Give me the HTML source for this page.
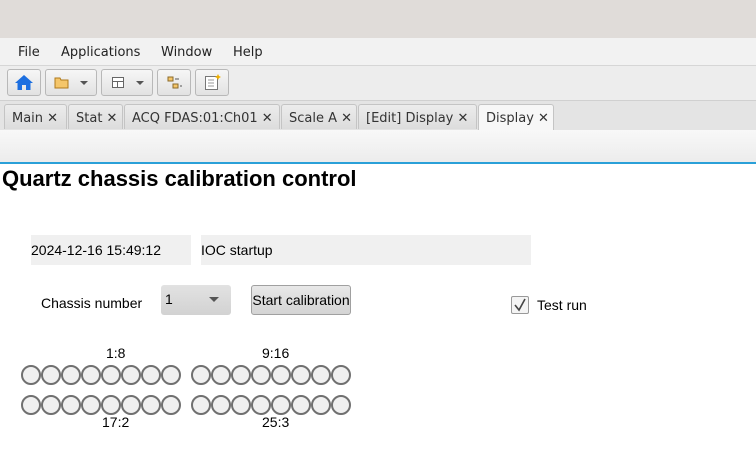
<!DOCTYPE html>
<html><head><style>
body{margin:0;width:756px;height:473px;background:#fff;font-family:"DejaVu Sans","Liberation Sans",sans-serif;position:relative;overflow:hidden}
.a{position:absolute}
.ls{font-family:"Liberation Sans",sans-serif}
.tb{position:absolute;top:69px;height:25px;border:1px solid #b8b8b8;border-radius:3px;background:linear-gradient(#f6f6f6,#e2e2e2)}
.tab{position:absolute;top:104px;height:25px;border:1px solid #c4c4c4;border-bottom:none;border-radius:3px 3px 0 0;background:linear-gradient(#ececec,#dcdcdc);font-size:13px;color:#333;line-height:27px;padding-left:7px;box-sizing:border-box}
.c{position:absolute;width:16px;height:16px;border:2px solid #707070;border-radius:50%;background:#f0f0f0}
</style></head><body>
<div class="a" style="left:0;top:0;width:756px;height:38px;background:#e0dcd9"></div>
<div class="a" style="left:0;top:38px;width:756px;height:27px;background:#f2f2f2;border-bottom:1px solid #d6d6d6"></div>
<div class="a" style="left:18px;top:45px;font-size:13px;color:#222">File</div>
<div class="a" style="left:61px;top:45px;font-size:13px;color:#222">Applications</div>
<div class="a" style="left:161px;top:45px;font-size:13px;color:#222">Window</div>
<div class="a" style="left:233px;top:45px;font-size:13px;color:#222">Help</div>
<div class="a" style="left:0;top:66px;width:756px;height:34px;background:#ededed;border-bottom:1px solid #d0d0d0"></div>
<div class="tb" style="left:7px;width:32px"><svg width="32" height="25"><path d="M16 5 L7 13 L9.5 13 L9.5 20 L14 20 L14 15 L18 15 L18 20 L22.5 20 L22.5 13 L25 13Z" fill="#1d6fe0"/></svg></div>
<div class="tb" style="left:45px;width:50px"><svg width="50" height="25"><path d="M9 8h5l1 2h7v8H9z" fill="#f5c66a" stroke="#b07a1c"/><path d="M34 11h8l-4 4z" fill="#555"/></svg></div>
<div class="tb" style="left:101px;width:50px"><svg width="50" height="25"><rect x="10.5" y="7.5" width="11" height="10" fill="#fff" stroke="#666"/><path d="M10.5 11.5h11M15.5 11.5v6" stroke="#666"/><path d="M34 11h8l-4 4z" fill="#555"/></svg></div>
<div class="tb" style="left:157px;width:32px"><svg width="32" height="25"><rect x="10" y="7" width="5" height="4" fill="#f5c66a" stroke="#8a6a2a"/><rect x="15" y="14" width="5" height="4" fill="#f5c66a" stroke="#8a6a2a"/><path d="M17 9h4M22 16h2" stroke="#555"/></svg></div>
<div class="tb" style="left:195px;width:32px"><svg width="32" height="25"><rect x="9.5" y="6.5" width="12" height="13" fill="#fff" stroke="#777"/><path d="M12 10h6M12 13h6M12 16h6" stroke="#999"/><path d="M22 4l1 2 2 1-2 1-1 2-1-2-2-1 2-1z" fill="#f0b000"/></svg></div>
<div class="a" style="left:0;top:101px;width:756px;height:29px;background:#e4e4e4;border-bottom:1px solid #c8c8c8"></div>
<div class="tab" style="left:4px;width:63px">Main ✕</div>
<div class="tab" style="left:68px;width:55px">Stat ✕</div>
<div class="tab" style="left:124px;width:156px">ACQ FDAS:01:Ch01 ✕</div>
<div class="tab" style="left:281px;width:76px">Scale A ✕</div>
<div class="tab" style="left:358px;width:119px">[Edit] Display ✕</div>
<div class="tab" style="left:478px;width:76px;background:#f7f7f7;height:27px">Display ✕</div>
<div class="a" style="left:0;top:130px;width:756px;height:32px;background:linear-gradient(#f8f8f8,#ececec)"></div>
<div class="a" style="left:0;top:162px;width:756px;height:2px;background:#2aa0d8"></div>
<div class="a ls" style="left:2px;top:166px;font-size:22px;font-weight:bold;color:#000">Quartz chassis calibration control</div>
<div class="a ls" style="left:31px;top:235px;width:160px;height:30px;background:#f0f0f0;font-size:14px;line-height:30px;box-sizing:border-box;padding-left:0">2024-12-16 15:49:12</div>
<div class="a ls" style="left:201px;top:235px;width:330px;height:30px;background:#f0f0f0;font-size:14px;line-height:30px">IOC startup</div>
<div class="a ls" style="left:41px;top:295px;font-size:14px">Chassis number</div>
<div class="a ls" style="left:161px;top:285px;width:70px;height:30px;background:linear-gradient(#e2e2e2,#d2d2d2);border-radius:3px;font-size:14px;line-height:28px;padding-left:4px;box-sizing:border-box">1<svg class="a" style="left:48px;top:12px" width="10" height="6"><path d="M0 0h10l-5 5z" fill="#555"/></svg></div>
<div class="a ls" style="left:251px;top:285px;width:100px;height:30px;background:linear-gradient(#e8e8e8,#d4d4d4);border:1px solid #a0a0a0;border-radius:3px;box-sizing:border-box;font-size:14px;line-height:28px;text-align:center">Start calibration</div>
<div class="a" style="left:511px;top:296px;width:18px;height:18px;border:1px solid #999;border-radius:2px;background:#f4f4f4;box-sizing:border-box"><svg width="16" height="16"><path d="M3 8l4 5 6-11" fill="none" stroke="#444" stroke-width="1.6"/></svg></div>
<div class="a ls" style="left:537px;top:297px;font-size:14px">Test run</div>
<div class="a ls" style="left:106px;top:345px;font-size:14px">1:8</div>
<div class="a ls" style="left:262px;top:345px;font-size:14px">9:16</div>
<div class="a ls" style="left:102px;top:414px;font-size:14px">17:2</div>
<div class="a ls" style="left:262px;top:414px;font-size:14px">25:3</div>
<div id="cs"></div>
<script>
var h='';[21,191].forEach(function(x0){[365,395].forEach(function(y){for(var i=0;i<8;i++)h+='<div class="c" style="left:'+(x0+i*20)+'px;top:'+y+'px"></div>';});});
document.getElementById('cs').innerHTML=h;
</script>
</body></html>
